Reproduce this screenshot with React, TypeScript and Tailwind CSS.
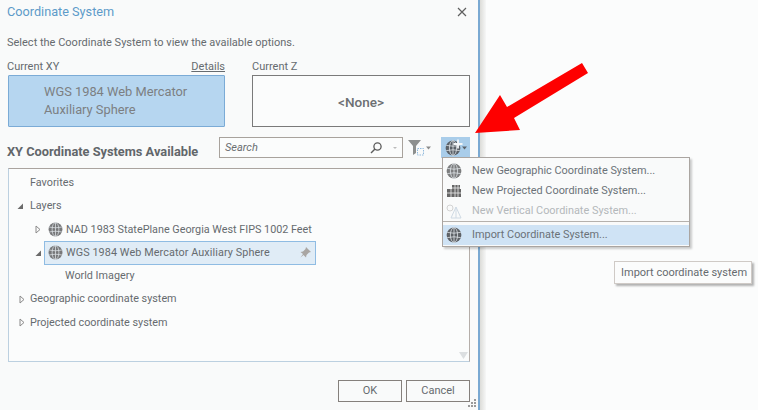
import React from "react";

const font = { fontFamily: 'Roboto, "Noto Sans", sans-serif' };

function Globe({ size = 16, fill = "#77787a" }: { size?: number; fill?: string }) {
  return (
    <svg width={size} height={size} viewBox="0 0 16 16" className="shrink-0">
      <circle cx="8" cy="8" r="7.4" fill={fill} />
      <g fill="none" stroke="#dfe4e8" strokeWidth="0.8">
        <ellipse cx="8" cy="8" rx="3.6" ry="7.4" />
        <path d="M8 .6v14.8M1.200 5.400q6.800 1.600 13.600 0M1.200 10.600q6.800-1.600 13.600 0" />
      </g>
    </svg>
  );
}

function Tri({ open }: { open?: boolean }) {
  return open ? (
    <svg width="8" height="8" viewBox="0 0 8 8" className="shrink-0">
      <path d="M7 1.500V7H1.500Z" fill="#6a6a6a" />
    </svg>
  ) : (
    <svg width="8" height="9" viewBox="0 0 8 9" className="shrink-0">
      <path d="M2 1l4 3.500L2 8Z" fill="#fafafa" stroke="#8a8a8a" />
    </svg>
  );
}

function MenuRow({ icon, label, muted, active }: { icon: React.ReactNode; label: string; muted?: boolean; active?: boolean }) {
  return (
    <div className={`flex items-center h-[20px] ${active ? "bg-[#cfe3f5]" : ""}`}>
      <div className="w-[22px] flex justify-center shrink-0">{icon}</div>
      <span className={`text-[10.9px] leading-none ml-[7px] ${muted ? "text-[#b4b8ba]" : "text-[#6b7278]"}`}>{label}</span>
    </div>
  );
}

export default function App() {
  return (
    <div style={font} className="relative flex w-[758px] h-[410px] overflow-hidden bg-[#fbfcfc] text-[#666b6f]">
      <div className="relative flex flex-col w-[478px] h-full shrink-0 bg-[#f9fafa] px-[8px]">
        <div className="flex items-center justify-between h-[24px] -ml-[1px] pr-[1px]">
          <span className="text-[12.7px] text-[#5d9bc9]">Coordinate System</span>
          <svg width="10" height="10" viewBox="0 0 10 10" className="mr-[2px]">
            <path d="M1 1l8 8M9 1l-8 8" stroke="#5f5f5f" strokeWidth="1.2" />
          </svg>
        </div>
        <div className="mt-[11px] h-[16px] text-[11px] leading-[16px] whitespace-nowrap -ml-[1px]">Select the Coordinate System to view the available options.</div>
        <div className="mt-[7px] flex gap-[27px] w-[462px]">
          <div className="w-[217px]">
            <div className="flex justify-between h-[16px] text-[11px] leading-[18px] mb-[1px] -ml-[1px]">
              <span>Current XY</span>
              <span className="underline">Details</span>
            </div>
            <div className="h-[52px] bg-[#b6d6f0] border border-[#7babd6] rounded-[1px] flex items-center pl-[35px] text-[12.85px] leading-[18px] text-[#7c7f82]">
              <div>WGS 1984 Web Mercator<br />Auxiliary Sphere</div>
            </div>
          </div>
          <div className="w-[218px]">
            <div className="h-[16px] text-[11px] leading-[18px] mb-[1px]">Current Z</div>
            <div className="h-[52px] bg-[#fbfcfc] border border-[#7a7a7a] flex items-center justify-center pt-[2px] text-[13.5px] font-medium text-[#6c6f72]">&lt;None&gt;</div>
          </div>
        </div>
        <div className="mt-[10px] flex items-center w-[462px] h-[21px]">
          <span className="text-[12.8px] font-bold text-[#62666a] whitespace-nowrap -ml-[1px] mt-[8px]">XY Coordinate Systems Available</span>
          <div className="ml-auto flex items-center w-[184px] h-[21px] border border-[#a8a29c] bg-[#fbfcfc] pl-[5px] pr-[5px]">
            <span className="text-[11px] italic text-[#6b6f72] pt-[2px]">Search</span>
            <svg width="14" height="14" viewBox="0 0 14 14" className="ml-auto mr-[10px]">
              <circle cx="8.500" cy="5.500" r="3.600" fill="none" stroke="#5c5c5c" strokeWidth="1.300" />
              <path d="M6 8L2 12" stroke="#5c5c5c" strokeWidth="1.500" />
            </svg>
            <svg width="4" height="4" viewBox="0 0 4 4"><path d="M0 1h4L2 3Z" fill="#bbb" /></svg>
          </div>
          <div className="w-[38px] flex items-center justify-center shrink-0 gap-[1px] pr-[5px]">
            <svg width="17" height="18" viewBox="0 0 17 18">
              <path d="M0 1h13L8 7v7L5 16V7Z" fill="#8d8f8e" />
              <rect x="9.500" y="9.500" width="6" height="6.500" fill="none" stroke="#8fb9dd" strokeDasharray="1.500 1" />
            </svg>
            <svg width="5" height="4" viewBox="0 0 5 4"><path d="M0 .5h5L2.500 3.500Z" fill="#8a8a8a" /></svg>
          </div>
          <div className="w-[29px] h-[21px] shrink-0 bg-[#a9cdea] flex items-center justify-center gap-[1px]">
            <div className="relative w-[16px] h-[16px]">
              <Globe size={16} fill="#5a6168" />
              <svg width="10" height="10" viewBox="0 0 10 10" className="absolute -top-[1px] -right-[2px]">
                <path d="M5 .5v9M.5 5h9" stroke="#f4f7f9" strokeWidth="1.800" />
              </svg>
            </div>
            <svg width="5" height="4" viewBox="0 0 5 4"><path d="M0 .5h5L2.500 3.500Z" fill="#5a6168" /></svg>
          </div>
        </div>
        <div className="mt-[10px] w-[462px] h-[194px] border border-[#bcd0e0] border-t-[#aaa39e] border-r-[#b5aea9] bg-[#fbfcfc] text-[10.8px] relative pt-[2.4px]">
          <div className="flex items-center h-[23.3px] pl-[21px]">Favorites</div>
          <div className="flex items-center h-[23.3px] pl-[7px] gap-[6px]"><Tri open /><span>Layers</span></div>
          <div className="flex items-center h-[23.3px] pl-[25px] gap-[6px] whitespace-nowrap"><Tri /><Globe size={15} /><span className="-ml-[3px]">NAD 1983 StatePlane Georgia West FIPS 1002 Feet</span></div>
          <div className="flex items-center h-[23.3px] pl-[25px] gap-[4px] whitespace-nowrap">
            <Tri open />
            <div className="flex items-center w-[272px] h-[24px] bg-[#e0ecf6] border border-[#8fbce3] pl-[3px] gap-[4px] -ml-[2px]">
              <Globe size={15} />
              <span className="-ml-[1px] tracking-[0.1px]">WGS 1984 Web Mercator Auxiliary Sphere</span>
              <svg width="11" height="11" viewBox="0 0 11 11" className="ml-auto mr-[4px]">
                <path d="M6 0l5 5-2 .5-2.500 2.500L6 10.500 3.500 8 .5 10.500 3 7 .5 5 3 4.500 5.500 2Z" fill="#a9a6a3" />
              </svg>
            </div>
          </div>
          <div className="flex items-center h-[23.3px] pl-[56px]">World Imagery</div>
          <div className="flex items-center h-[23.3px] pl-[9px] gap-[4px]"><Tri /><span>Geographic coordinate system</span></div>
          <div className="flex items-center h-[23.3px] pl-[9px] gap-[4px]"><Tri /><span>Projected coordinate system</span></div>
          <svg width="9" height="7" viewBox="0 0 9 7" className="absolute right-[1px] bottom-[2px]"><path d="M0 0h9L4.500 7Z" fill="#dcdfe1" /></svg>
        </div>
        <div className="mt-[18px] flex justify-end gap-[4px] w-[462px] text-[11px]">
          <div className="w-[64px] h-[22px] border border-[#85807c] flex items-center justify-center">OK</div>
          <div className="w-[64px] h-[22px] border border-[#85807c] flex items-center justify-center">Cancel</div>
        </div>
        <svg width="10" height="10" viewBox="0 0 10 10" className="absolute right-[1px] bottom-[2px]">
          <g fill="#9a9a9a"><rect x="7" y="1" width="2" height="2" /><rect x="4" y="4" width="2" height="2" /><rect x="7" y="4" width="2" height="2" /><rect x="1" y="7" width="2" height="2" /><rect x="4" y="7" width="2" height="2" /><rect x="7" y="7" width="2" height="2" /></g>
        </svg>
      </div>
      <div className="w-[2px] h-full shrink-0 bg-[#7aa9d2]" />
      <div className="w-[6px] h-full shrink-0 bg-gradient-to-r from-[#dcdcd8] to-[#f6f7f7]" />

      <svg width="758" height="410" viewBox="0 0 758 410" className="absolute left-0 top-0 pointer-events-none">
        <polygon points="582,63 588,73 514,118 520,130 475,133 500,95 507,107" fill="#fe0000" />
      </svg>

      <div className="absolute left-[442px] top-[157px] w-[248px] h-[90px] bg-[#f9fafa] border border-[#aaa5a1] shadow-[2px_2px_2px_rgba(0,0,0,0.2)] pt-[3px]">
        <MenuRow icon={<Globe size={16} fill="#7c7d7e" />} label="New Geographic Coordinate System..." />
        <MenuRow
          icon={
            <svg width="16" height="14" viewBox="0 0 16 14">
              <rect x="1" y="5" width="14" height="8" fill="#666" />
              <rect x="6" y="1" width="8" height="12" fill="#666" />
              <path d="M1 9h14M5 5v8M9 1v12M12 1v12M6 4h8" stroke="#eee" strokeWidth=".8" />
            </svg>
          }
          label="New Projected Coordinate System..."
        />
        <MenuRow
          muted
          icon={
            <svg width="16" height="15" viewBox="0 0 16 15">
              <circle cx="4" cy="4" r="3" fill="none" stroke="#d3d3d3" />
              <path d="M10 3l-5 11h10Z" fill="none" stroke="#cfdae4" />
              <path d="M10 3v11" stroke="#cfdae4" />
            </svg>
          }
          label="New Vertical Coordinate System..."
        />
        <div className="h-[1px] bg-[#b5b1ad] mb-[3px]" />
        <MenuRow active icon={<Globe size={16} fill="#5d6166" />} label="Import Coordinate System..." />
      </div>

      <div className="absolute left-[614px] top-[261px] w-[138px] h-[23px] bg-[#fbfcfc] border border-[#cfcac6] shadow-[2px_2px_2px_rgba(0,0,0,0.3)] flex items-center pl-[6px] pt-[1px] text-[11px] whitespace-nowrap text-[#666b6f]">
        Import coordinate system
      </div>
    </div>
  );
}
